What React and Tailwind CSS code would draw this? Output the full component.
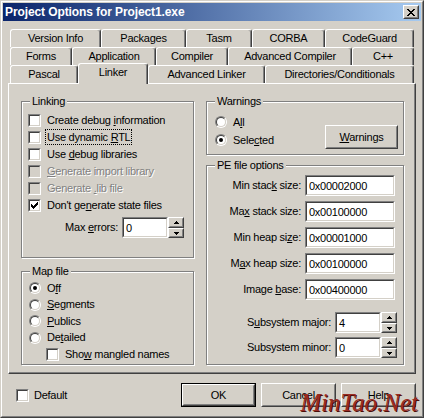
const Raised = ({ className = "", children }) => (
  <div className={`border border-t-white border-l-white border-r-[#404040] border-b-[#404040] bg-[#d4d0c8] ${className}`}>
    <div className="flex h-full w-full items-center justify-center border border-t-[#d4d0c8] border-l-[#d4d0c8] border-r-[#808080] border-b-[#808080]">
      {children}
    </div>
  </div>
);

const Sunken = ({ className = "", disabled, children }) => (
  <div className={`border border-t-[#808080] border-l-[#808080] border-r-white border-b-white ${className}`}>
    <div
      className={`h-full w-full border border-t-[#404040] border-l-[#404040] border-r-[#d4d0c8] border-b-[#d4d0c8] ${
        disabled ? "bg-[#d4d0c8]" : "bg-white"
      }`}
    >
      {children}
    </div>
  </div>
);

const U = ({ children }) => <span className="underline underline-offset-[1px]">{children}</span>;

const Check = ({ checked, disabled }) => (
  <Sunken className="h-[13px] w-[13px] shrink-0" disabled={disabled}>
    {checked && (
      <svg width="9" height="9" viewBox="0 0 9 9" shapeRendering="crispEdges" className="block">
        <path
          d="M7 1h1v1H7z M6 2h2v1H6z M1 3h1v1H1z M5 3h3v1H5z M1 4h2v1H1z M4 4h3v1H4z M1 5h5v1H1z M2 6h3v1H2z M3 7h1v1H3z"
          fill="#000"
        />
      </svg>
    )}
  </Sunken>
);

const Radio = ({ checked }) => (
  <div className="h-[12px] w-[12px] shrink-0 rounded-full border border-t-[#808080] border-l-[#808080] border-r-white border-b-white">
    <div className="flex h-full w-full items-center justify-center rounded-full border border-t-[#404040] border-l-[#404040] border-r-[#d4d0c8] border-b-[#d4d0c8] bg-white">
      {checked && <div className="h-[4px] w-[4px] rounded-full bg-black" />}
    </div>
  </div>
);

const Spin = () => (
  <div className="flex h-[21px] w-[16px] flex-col">
    <Raised className="h-[11px] w-full">
      <svg width="5" height="3" viewBox="0 0 5 3" shapeRendering="crispEdges">
        <path d="M2 0h1v1H2z M1 1h3v1H1z M0 2h5v1H0z" fill="#000" />
      </svg>
    </Raised>
    <Raised className="h-[10px] w-full">
      <svg width="5" height="3" viewBox="0 0 5 3" shapeRendering="crispEdges">
        <path d="M0 0h5v1H0z M1 1h3v1H1z M2 2h1v1H2z" fill="#000" />
      </svg>
    </Raised>
  </div>
);

const Edit = ({ value, className = "" }) => (
  <Sunken className={`h-[21px] ${className}`}>
    <div className="pl-[2px] pt-[1px] leading-[16px]">{value}</div>
  </Sunken>
);

const Group = ({ title, className = "", children }) => (
  <div className={`relative border border-[#808080] shadow-[inset_1px_1px_0_#fff,1px_1px_0_#fff] ${className}`}>
    <span className="absolute -top-[8px] left-[8px] bg-[#d4d0c8] px-[2px] leading-[14px]">{title}</span>
    {children}
  </div>
);

const Tab = ({ className = "", children }) => (
  <div
    className={`flex h-[18px] items-center justify-center rounded-t-[3px] border-t border-l border-r border-t-white border-l-white border-r-[#404040] shadow-[inset_-1px_0_0_#808080] ${className}`}
  >
    {children}
  </div>
);

const CheckRow = ({ checked, disabled, children }) => (
  <div className="flex h-[17px] items-center gap-[6px]">
    <Check checked={checked} disabled={disabled} />
    <span className={disabled ? "text-[#808080] [text-shadow:1px_1px_0_#fff]" : ""}>{children}</span>
  </div>
);

const RadioRow = ({ checked, className = "", children }) => (
  <div className={`flex items-center gap-[6px] ${className}`}>
    <Radio checked={checked} />
    <span>{children}</span>
  </div>
);

const PeRow = ({ label, value }) => (
  <div className="flex h-[21px] items-center justify-end gap-[4px] pr-[8px]">
    <span>{label}</span>
    <Edit value={value} className="w-[90px]" />
  </div>
);

export default function App() {
  return (
    <div className="relative h-[418px] w-[424px] overflow-hidden border border-t-[#d4d0c8] border-l-[#d4d0c8] border-r-[#404040] border-b-[#404040] bg-[#d4d0c8] font-['Liberation_Sans',Arial,sans-serif] text-[11px] leading-none tracking-[-0.25px] text-black">
      <div className="flex h-full flex-col border border-t-white border-l-white border-r-[#808080] border-b-[#808080] p-[1px]">
        {/* title bar */}
        <div className="flex h-[18px] shrink-0 items-center justify-between bg-[linear-gradient(to_right,#0a246a,#a6caf0)] pl-[2px] pr-[2px]">
          <span className="text-[12px] font-bold tracking-[-0.1px] text-white">Project Options for Project1.exe</span>
          <Raised className="h-[14px] w-[16px]">
            <svg width="8" height="7" viewBox="0 0 8 7" shapeRendering="crispEdges">
              <path
                d="M0 0h2v1H0z M6 0h2v1H6z M1 1h2v1H1z M5 1h2v1H5z M2 2h4v1H2z M3 3h2v1H3z M2 4h4v1H2z M1 5h2v1H1z M5 5h2v1H5z M0 6h2v1H0z M6 6h2v1H6z"
                fill="#000"
              />
            </svg>
          </Raised>
        </div>

        {/* tabs */}
        <div className="mt-[8px] px-[5px]">
          <div className="ml-[2px] flex">
            <Tab className="w-[91px]">Version Info</Tab>
            <Tab className="w-[85px]">Packages</Tab>
            <Tab className="w-[66px]">Tasm</Tab>
            <Tab className="w-[73px]">CORBA</Tab>
            <Tab className="w-[89px]">CodeGuard</Tab>
          </div>
          <div className="ml-[2px] flex">
            <Tab className="w-[62px]">Forms</Tab>
            <Tab className="w-[84px]">Application</Tab>
            <Tab className="w-[72px]">Compiler</Tab>
            <Tab className="w-[124px]">Advanced Compiler</Tab>
            <Tab className="w-[62px]">C++</Tab>
          </div>
          <div className="ml-[2px] flex h-[18px] items-end">
            <Tab className="w-[68px]">Pascal</Tab>
            <div className="relative z-10 -mb-[1px] flex h-[21px] w-[70px] items-center justify-center rounded-t-[3px] border-t border-l border-r border-t-white border-l-white border-r-[#404040] bg-[#d4d0c8] pb-[3px] shadow-[inset_-1px_0_0_#808080]">
              Linker
            </div>
            <Tab className="w-[117px]">Advanced Linker</Tab>
            <Tab className="w-[149px]">Directories/Conditionals</Tab>
          </div>

          {/* panel */}
          <div className="flex h-[291px] gap-[12px] border border-t-white border-l-white border-r-[#404040] border-b-[#404040] pl-[12px] pt-[17px] shadow-[inset_-1px_-1px_0_#808080]">
            <div className="flex w-[173px] flex-col">
              <Group title="Linking" className="h-[157px] pl-[6px] pt-[10px]">
                <CheckRow>
                  Create debug <U>i</U>nformation
                </CheckRow>
                <CheckRow>
                  <span className="outline-1 outline-dotted outline-black outline-offset-[1px]">
                    Use dynamic <U>R</U>TL
                  </span>
                </CheckRow>
                <CheckRow>
                  Use <U>d</U>ebug libraries
                </CheckRow>
                <CheckRow disabled>
                  <U>G</U>enerate import library
                </CheckRow>
                <CheckRow disabled>
                  Generate <U>.</U>lib file
                </CheckRow>
                <CheckRow checked>
                  Don't ge<U>n</U>erate state files
                </CheckRow>
                <div className="mt-[3px] flex items-center">
                  <span className="mr-[4px] w-[90px] text-right">
                    Max <U>e</U>rrors:
                  </span>
                  <Edit value="0" className="w-[46px]" />
                  <Spin />
                </div>
              </Group>

              <Group title="Map file" className="mt-[13px] h-[94px] pl-[7px] pt-[8px]">
                <RadioRow checked className="h-[16.5px]">
                  O<U>f</U>f
                </RadioRow>
                <RadioRow className="h-[16.5px]">
                  <U>S</U>egments
                </RadioRow>
                <RadioRow className="h-[16.5px]">
                  <U>P</U>ublics
                </RadioRow>
                <RadioRow className="h-[16.5px]">
                  De<U>t</U>ailed
                </RadioRow>
                <div className="ml-[17px]">
                  <CheckRow>
                    Sho<U>w</U> mangled names
                  </CheckRow>
                </div>
              </Group>
            </div>

            <div className="flex w-[198px] flex-col">
              <Group title="Warnings" className="flex h-[54px] justify-between pl-[8px]">
                <div className="pt-[11px]">
                  <RadioRow className="h-[18px] gap-[5px]">
                    A<U>l</U>l
                  </RadioRow>
                  <RadioRow checked className="h-[18px] gap-[5px]">
                    Sele<U>c</U>ted
                  </RadioRow>
                </div>
                <Raised className="mr-[5px] mt-[23px] h-[24px] w-[73px]">
                  <span>
                    <U>W</U>arnings
                  </span>
                </Raised>
              </Group>

              <Group title="PE file options" className="mt-[10px] flex h-[200px] flex-col gap-[5px] pt-[9px]">
                <PeRow label={<>Min stac<U>k</U> size:</>} value="0x00002000" />
                <PeRow label={<>Ma<U>x</U> stack size:</>} value="0x00100000" />
                <PeRow label={<>Min heap si<U>z</U>e:</>} value="0x00001000" />
                <PeRow label={<>M<U>a</U>x heap size:</>} value="0x00100000" />
                <PeRow label={<>Image <U>b</U>ase:</>} value="0x00400000" />
                <div className="mt-[7px] flex h-[21px] items-center justify-end gap-[4px] pr-[6px]">
                  <span>
                    S<U>u</U>bsystem major:
                  </span>
                  <div className="flex">
                    <Edit value="4" className="w-[46px]" />
                    <Spin />
                  </div>
                </div>
                <div className="-mt-[1px] flex h-[21px] items-center justify-end gap-[4px] pr-[6px]">
                  <span>Subsystem minor:</span>
                  <div className="flex">
                    <Edit value="0" className="w-[46px]" />
                    <Spin />
                  </div>
                </div>
              </Group>
            </div>
          </div>

          {/* bottom buttons */}
          <div className="mt-[9px] flex h-[24px] items-center justify-between">
            <div className="flex items-center gap-[5px] pl-[8px]">
              <Check />
              <span>Default</span>
            </div>
            <div className="flex gap-[5px]">
              <div className="h-[24px] w-[75px] border border-black">
                <Raised className="h-full w-full">OK</Raised>
              </div>
              <Raised className="h-[24px] w-[75px]">Cancel</Raised>
              <Raised className="h-[24px] w-[75px]">Help</Raised>
            </div>
          </div>
        </div>
      </div>

      <span className="absolute bottom-[2px] right-[5px] font-['Liberation_Serif','Times_New_Roman',serif] text-[25px] italic leading-none tracking-normal text-[#9b2c22] [text-shadow:1px_1px_0_#4a0d08]">
        MinTao.Net
      </span>
    </div>
  );
}
